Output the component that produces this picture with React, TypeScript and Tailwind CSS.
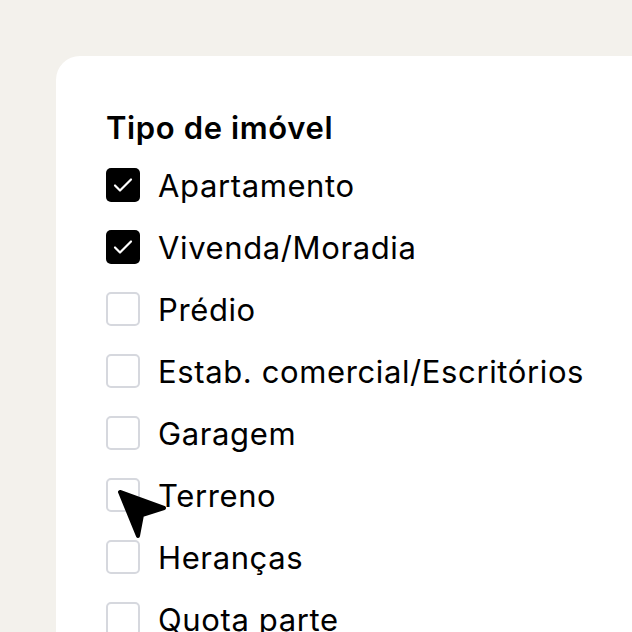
const options = [
  { label: "Apartamento", checked: true },
  { label: "Vivenda/Moradia", checked: true },
  { label: "Prédio", checked: false },
  { label: "Estab. comercial/Escritórios", checked: false },
  { label: "Garagem", checked: false },
  { label: "Terreno", checked: false },
  { label: "Heranças", checked: false },
  { label: "Quota parte", checked: false },
];

function Box({ checked }: { checked: boolean }) {
  if (checked) {
    return (
      <span className="flex h-[34px] w-[34px] shrink-0 items-center justify-center rounded-[5px] bg-black">
        <svg width="20" height="16" viewBox="0 0 20 16" fill="none" stroke="white" strokeWidth="2.2" strokeLinecap="round" strokeLinejoin="round">
          <path d="M2 8.5l5 5L18 2.5" />
        </svg>
      </span>
    );
  }
  return <span className="h-[34px] w-[34px] shrink-0 rounded-[5px] border-2 border-[#d6d8de] bg-white" />;
}

export default function App() {
  return (
    <div className="h-[632px] w-[632px] overflow-hidden bg-[#f3f1ec] pl-14 pt-14" style={{ fontFamily: "Inter, 'Noto Sans', sans-serif" }}>
      <div className="relative h-[700px] w-[700px] rounded-[24px] bg-white pl-[50px] pt-[52px]">
        <h2 className="text-[31px] font-semibold leading-[40px] tracking-[0.02em] text-black">Tipo de imóvel</h2>
        <ul className="mt-[20px] flex flex-col gap-[28px]">
          {options.map((o) => (
            <li key={o.label} className="flex h-[34px] items-center gap-[18px]">
              <Box checked={o.checked} />
              <span className="text-[31px] leading-none tracking-[0.02em] text-black">{o.label}</span>
            </li>
          ))}
        </ul>
        <svg className="absolute left-[61px] top-[433px]" width="52" height="52" viewBox="0 0 52 52">
          <path d="M3 3 L47 19 L25 26 L21 47 Z" fill="black" stroke="black" strokeWidth="4" strokeLinejoin="round" />
        </svg>
      </div>
    </div>
  );
}
